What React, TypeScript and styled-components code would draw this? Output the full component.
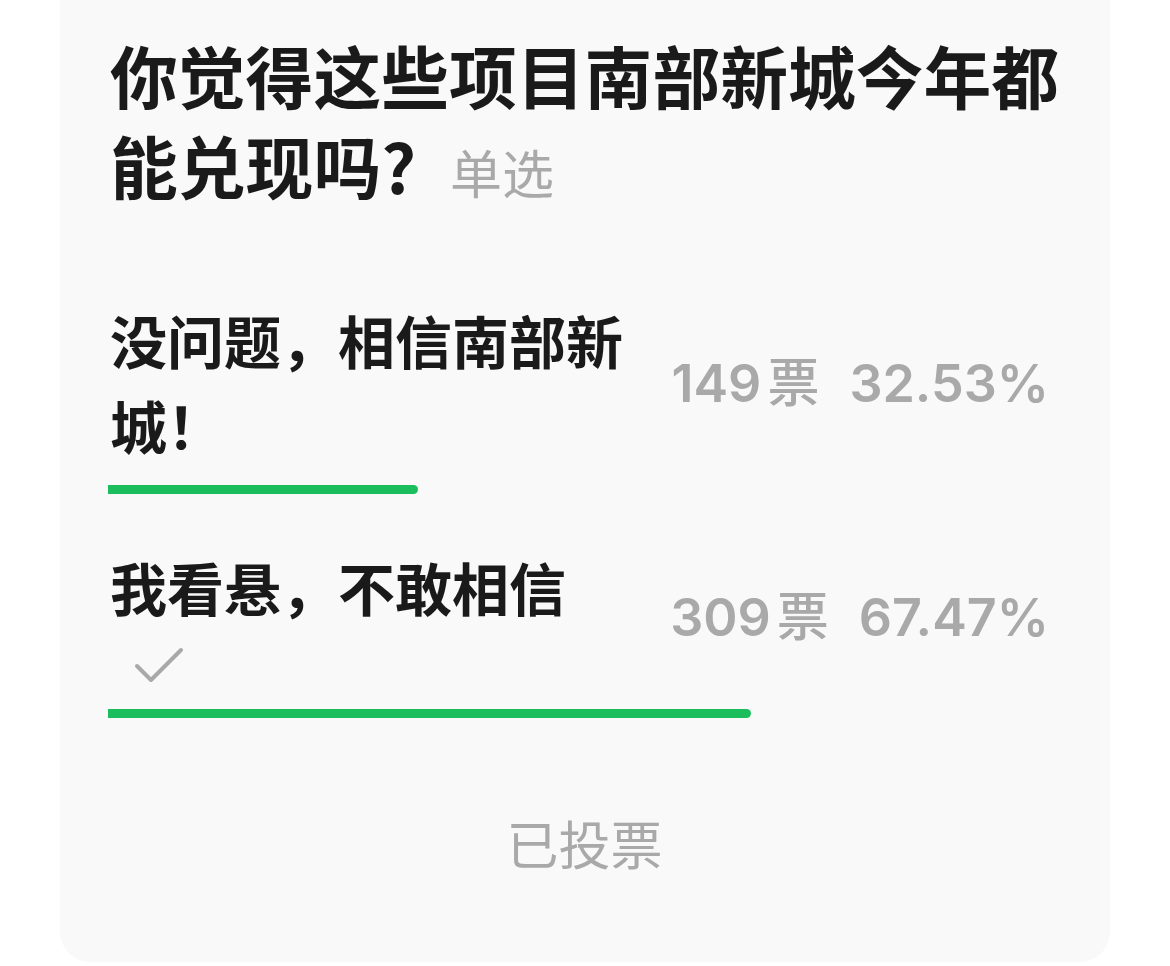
import React from 'react'
import styled, { createGlobalStyle } from 'styled-components'

const GlobalStyle = createGlobalStyle`
  html, body {
    margin: 0;
    padding: 0;
    background: #ffffff;
  }
  body {
    font-family: "Noto Sans CJK SC", "Noto Sans", sans-serif;
    -webkit-font-smoothing: antialiased;
  }
`

type Option = {
  label: string
  votes: number
  percent: number
  chosen?: boolean
}

const options: Option[] = [
  { label: '没问题，相信南部新城！', votes: 149, percent: 32.53 },
  { label: '我看悬，不敢相信', votes: 309, percent: 67.47, chosen: true },
]

const Page = styled.div`
  padding: 0 60px;
`

const Card = styled.div`
  background: #f9f9f9;
  border-radius: 0 0 30px 30px;
  padding: 30px 49px 89px 48px;
`

const Title = styled.h1`
  margin: 0 0 0 2px;
  font-size: 67.8px;
  line-height: 90px;
  font-weight: 700;
  color: #1a1a1a;
`

const Tag = styled.span`
  margin-left: 34px;
  font-size: 52px;
  font-weight: 400;
  color: #a9a9a9;
  vertical-align: baseline;
`

const OptionBlock = styled.div<{ $first?: boolean }>`
  margin-top: ${(p) => (p.$first ? '80px' : '50px')};
`

const Row = styled.div`
  display: flex;
  align-items: center;
`

const LabelCol = styled.div`
  width: 540px;
  padding-left: 2px;
`

const Label = styled.div`
  font-size: 57px;
  line-height: 85px;
  font-weight: 700;
  color: #1a1a1a;
`

const Check = styled.svg`
  display: block;
  margin: 14px 0 0 20px;
`

const Stats = styled.div`
  margin-left: auto;
  padding-right: 12px;
  font-family: Inter, "Noto Sans CJK SC", sans-serif;
  font-size: 52px;
  line-height: 60px;
  font-weight: 600;
  color: #a9a9a9;
  white-space: nowrap;
`

const Unit = styled.span`
  margin-left: 6px;
  font-family: "Noto Sans CJK SC", sans-serif;
  font-weight: 500;
`

const Percent = styled.span`
  margin-left: 30px;
`

const Track = styled.div<{ $chosen?: boolean }>`
  margin-top: ${(p) => (p.$chosen ? '22px' : '18px')};
  height: 9px;
`

const Fill = styled.div`
  height: 100%;
  background: #1bbd5d;
  border-radius: 0 5px 5px 0;
`

const Voted = styled.div`
  margin-top: 95px;
  text-align: center;
  font-size: 52px;
  line-height: 60px;
  font-weight: 400;
  color: #a9a9a9;
`

export default function App() {
  return (
    <Page>
      <GlobalStyle />
      <Card>
        <Title>
          你觉得这些项目南部新城今年都能兑现吗?
          <Tag>单选</Tag>
        </Title>
        {options.map((o, i) => (
          <OptionBlock key={o.label} $first={i === 0}>
            <Row>
              <LabelCol>
                <Label>{o.label}</Label>
                {o.chosen && (
                  <Check width="60" height="44" viewBox="0 0 60 44">
                    <path
                      d="M7 23 L21 37 L51 7"
                      fill="none"
                      stroke="#a9a9a9"
                      strokeWidth="4"
                      strokeLinecap="round"
                      strokeLinejoin="round"
                    />
                  </Check>
                )}
              </LabelCol>
              <Stats>
                {o.votes}
                <Unit>票</Unit>
                <Percent>{o.percent.toFixed(2)}%</Percent>
              </Stats>
            </Row>
            <Track $chosen={o.chosen}>
              <Fill style={{ width: `${o.percent}%` }} />
            </Track>
          </OptionBlock>
        ))}
        <Voted>已投票</Voted>
      </Card>
    </Page>
  )
}
